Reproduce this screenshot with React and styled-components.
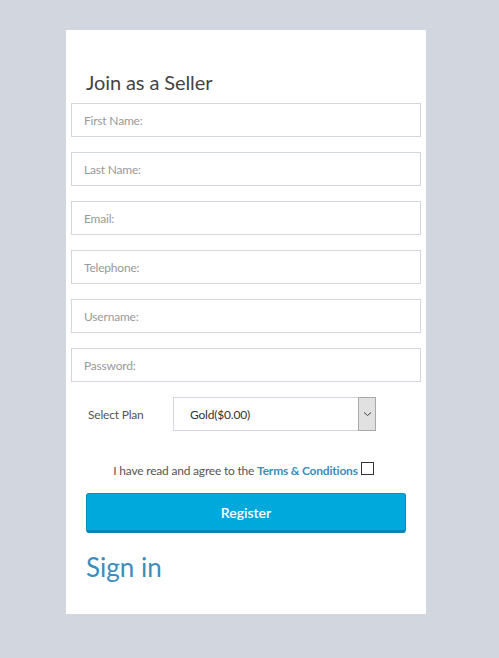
import React from "react";
import styled, { createGlobalStyle } from "styled-components";

const Global = createGlobalStyle`
  html, body { margin: 0; padding: 0; background: #d2d6de; }
  body { font-family: Lato, "Noto Sans", sans-serif; }
  * { box-sizing: border-box; }
`;

const Page = styled.div`
  width: 499px;
  height: 658px;
  padding: 30px 0 0 66px;
`;

const Card = styled.div`
  width: 360px;
  height: 584px;
  background: #fff;
  display: flex;
  flex-direction: column;
`;

const Title = styled.h2`
  margin: 40px 0 0 20px;
  font-size: 20px;
  font-weight: 400;
  line-height: 25px;
  color: #444;
  letter-spacing: -0.1px;
`;

const Fields = styled.div`
  margin: 8px 5px 0;
  display: flex;
  flex-direction: column;
  gap: 15px;
`;

const Input = styled.input`
  width: 350px;
  height: 34px;
  border: 1px solid #d2d6de;
  padding: 0 12px;
  font-family: inherit;
  font-size: 12px;
  letter-spacing: -0.2px;
  color: #555;
  outline: none;
  &::placeholder { color: #999; }
`;

const PlanRow = styled.div`
  margin: 15px 0 0 22px;
  display: flex;
  align-items: center;
`;

const PlanLabel = styled.span`
  width: 85px;
  font-size: 12px;
  letter-spacing: -0.2px;
  color: #555;
`;

const SelectBox = styled.div`
  width: 203px;
  height: 34px;
  border: 1px solid #d2d6de;
  display: flex;
  align-items: stretch;
`;

const SelectValue = styled.span`
  flex: 1;
  display: flex;
  align-items: center;
  padding-left: 16px;
  font-size: 12px;
  letter-spacing: -0.2px;
  color: #333;
`;

const ArrowBox = styled.span`
  width: 18px;
  margin: -1px -1px -1px 0;
  background: #e1e1e1;
  border: 1px solid #a9a9a9;
  display: flex;
  align-items: center;
  justify-content: center;
`;

const Terms = styled.div`
  margin: 32px 0 0;
  display: flex;
  justify-content: center;
  align-items: center;
  gap: 3px;
  font-size: 12px;
  letter-spacing: -0.2px;
  color: #555;
  padding-right: 5px;
`;

const TermsLink = styled.a`
  color: #3c8dbc;
  font-weight: 700;
  text-decoration: none;
`;

const Check = styled.span`
  width: 13px;
  height: 13px;
  border: 1px solid #333;
  background: #fff;
  display: inline-block;
  margin-top: -4px;
`;

const Button = styled.button`
  margin: 15px 0 0 20px;
  width: 320px;
  height: 40px;
  background: #00a9dc;
  border: 1px solid #0390bf;
  border-bottom: 3px solid #0884b5;
  border-radius: 3px;
  color: #fff;
  font-family: inherit;
  font-size: 14px;
  font-weight: 600;
  cursor: pointer;
`;

const SignIn = styled.a`
  margin: 18px 0 0 20px;
  font-size: 26px;
  line-height: 32px;
  color: #3c8dbc;
  text-decoration: none;
`;

export default function App() {
  return (
    <>
      <Global />
      <Page>
        <Card>
          <Title>Join as a Seller</Title>
          <Fields>
            <Input placeholder="First Name:" />
            <Input placeholder="Last Name:" />
            <Input placeholder="Email:" />
            <Input placeholder="Telephone:" />
            <Input placeholder="Username:" />
            <Input placeholder="Password:" type="password" />
          </Fields>
          <PlanRow>
            <PlanLabel>Select Plan</PlanLabel>
            <SelectBox>
              <SelectValue>Gold($0.00)</SelectValue>
              <ArrowBox>
                <svg width="9" height="6" viewBox="0 0 9 6">
                  <path d="M1 1.5 L4.5 4.5 L8 1.5" fill="none" stroke="#444" strokeWidth="1" />
                </svg>
              </ArrowBox>
            </SelectBox>
          </PlanRow>
          <Terms>
            <span>
              I have read and agree to the <TermsLink href="#">Terms &amp; Conditions</TermsLink>
            </span>
            <Check />
          </Terms>
          <Button>Register</Button>
          <SignIn href="#">Sign in</SignIn>
        </Card>
      </Page>
    </>
  );
}
